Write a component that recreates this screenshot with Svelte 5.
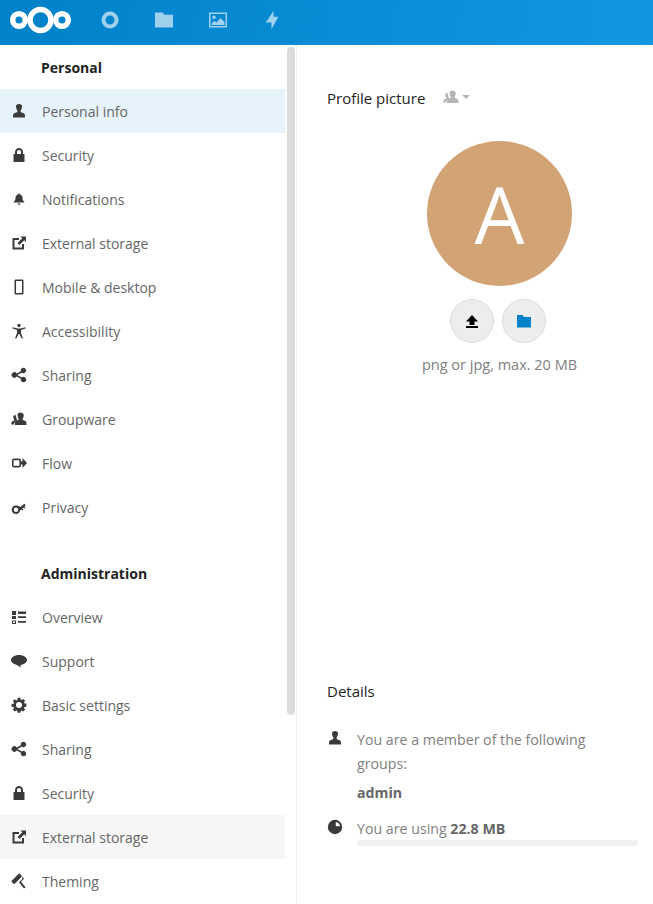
<script>
	const icons = {
		user: 'M8 1C6 1 5 2 5 3.200c0 1.400.5 2.800 1 3.800.3.6.5 1 .5 1.500 0 1-3.500 1.200-4.200 2.700C2 12.200 2 13 2 14.500h12c0-1.500 0-2.300-.3-3.300-.7-1.500-4.200-1.700-4.200-2.700 0-.5.2-.9.5-1.500.5-1 1-2.400 1-3.800C11 2 10 1 8 1z',
		lock: 'M8 1C5.800 1 4 2.800 4 5v2H2.500v8h11V7H12V5c0-2.200-1.800-4-4-4zm0 2c1.100 0 2 .9 2 2v2H6V5c0-1.100.9-2 2-2z',
		bell: 'M8 2.500c-.6 0-1 .4-1 .9C5.400 3.900 4.500 5.200 4.500 7c0 2-.8 3-1.800 3.800V11.500h10.600v-.7C12.300 10 11.500 9 11.500 7c0-1.800-.9-3.100-2.500-3.600 0-.5-.4-.9-1-.9zM6.500 12.500c0 .8.7 1.300 1.500 1.300s1.500-.5 1.500-1.300z',
		external: 'M9.500 1.500l1.800 1.800L6.500 8 8.500 10l4.700-4.700L15 7V1.500zM1.500 3v11.500H13V9h-2v3.500H3.500V5H8V3z',
		mobile: 'M5 .5C4 .5 3.500 1 3.500 2v12c0 1 .5 1.500 1.500 1.500h6c1 0 1.500-.5 1.500-1.500V2c0-1-.5-1.500-1.500-1.500zm0 1.500h6v12H5z',
		access: 'M8 .8a1.700 1.700 0 1 0 0 3.400A1.700 1.700 0 0 0 8 .8zM1.500 4.300v1.200L6 7v3l-2 5.500h1.300L7.700 11h.6l2.400 4.500H12L10 10V7l4.500-1.500V4.300L9 5.500H7z',
		share: 'M12.500 .8a2.700 2.700 0 0 0-2.600 3.400L5.700 6.400a2.800 2.800 0 1 0 0 3.200l4.200 2.200a2.700 2.700 0 1 0 1-1.400L6.700 8.200v-.4l4.200-2.100A2.700 2.700 0 1 0 12.500 .8z',
		group: 'M9 1.500C7.400 1.500 6.500 2.500 6.500 3.900c0 1.200.4 2.400.9 3.300.2.500.4.800.4 1.200 0 .9-3 1-3.500 2.300-.3.900-.3 2.300-.3 3.300H15.500c0-1 0-2.400-.3-3.300-.5-1.300-3.700-1.400-3.700-2.300 0-.4.2-.7.4-1.200.5-.9.9-2.100.9-3.300C12.800 2.500 10.600 1.500 9 1.500zM4.300 4C3.100 4 2.300 4.800 2.300 5.800c0 1 .3 1.800.7 2.500.2.300.3.600.3.900 0 .7-2.300.8-2.700 1.800C.3 11.600.3 12.500.3 13.500h2.900c0-2.300 1-3.300 3.300-4-.7-.9-1.200-2.200-1.300-3.600-.1-.7-.3-1.500-.9-1.900z',
		flow: 'M3 3.500C1.900 3.500 1 4.400 1 5.500v5c0 1.100.9 2 2 2h5c1.100 0 2-.9 2-2v-1h1.500V13l4.500-5-4.500-5v3.500H10v-1c0-1.100-.9-2-2-2zm0 1.700h5c.3 0 .4.1.4.4v4.800c0 .3-.1.4-.4.4H3c-.3 0-.4-.1-.4-.4V5.600c0-.3.1-.4.400-.4z',
		key: 'M5 6.500a4.200 4.200 0 1 0 4 5.300L10.300 10.500l1 1 1.100-1-1-1 .9-.9 1 1 1.100-1-1-1 1.300-1.300-1.200-1.600-4.400 3.200A4.200 4.200 0 0 0 5 6.500zm0 2a2.200 2.200 0 1 1 0 4.400 2.200 2.200 0 0 1 0-4.400z',
		overview: 'M1 2h4v4H1zM7 2.500h8V5H7zM1 7h4v3H1zM7 7.300h8v1.800H7zM1 11.500h4v3.500H1zm1 1v1.500h2v-1.500zM7 12h8v1.800H7z',
		support: 'M8 2C3.600 2 0 4.200 0 7c0 2.300 2.300 4.100 5.300 4.800 1.500.3 2.700 2 4.700 2.700-.5-.8-.7-1.800-.5-2.600C13.200 11.500 16 9.500 16 7 16 4.200 12.400 2 8 2z',
		gear: 'M6.700 1l-.4 2-.9.4-1.700-1.100-1.800 1.800 1.100 1.700-.4.900-2 .4v2.600l2 .4.400.9-1.100 1.700 1.800 1.800 1.700-1.100.9.400.4 2h2.600l.4-2 .9-.4 1.700 1.100 1.800-1.800-1.100-1.700.4-.9 2-.4V6.700l-2-.4-.4-.9 1.100-1.700-1.800-1.800-1.700 1.100-.9-.4-.4-2zM8 5a3 3 0 1 1 0 6 3 3 0 0 1 0-6z',
		theming: 'M7.500 1L1 7.500c-.6.6-.6 1.200 0 1.800l1.200 1.200c.6.6 1.200.6 1.800 0L10.500 4c.5-.5.5-1 0-1.500L9.300 1.200C8.700.5 8.100.4 7.500 1zM11.300 3.500l1.700 2.200-3 3 4.500 5.500-1.500 1.300-5-6.300 3.300-3.300z'
	};

	const personal = [
		['user', 'Personal info'], ['lock', 'Security'], ['bell', 'Notifications'],
		['external', 'External storage'], ['mobile', 'Mobile & desktop'], ['access', 'Accessibility'],
		['share', 'Sharing'], ['group', 'Groupware'], ['flow', 'Flow'], ['key', 'Privacy']
	];
	const admin = [
		['overview', 'Overview'], ['support', 'Support'], ['gear', 'Basic settings'],
		['share', 'Sharing'], ['lock', 'Security'], ['external', 'External storage'], ['theming', 'Theming']
	];
</script>

<div class="page">
	<header>
		<svg class="logo" width="62" height="28" viewBox="0 0 62 28">
			<g fill="none" stroke="#fff">
				<circle cx="9" cy="14" r="6.300" stroke-width="5.500" />
				<circle cx="30.500" cy="14" r="10.500" stroke-width="5.500" />
				<circle cx="52" cy="14" r="6.300" stroke-width="5.500" />
			</g>
		</svg>
		<nav class="apps">
			<span class="app">
				<svg width="18" height="18" viewBox="0 0 18 18"><circle cx="9" cy="9" r="6.500" fill="none" stroke="#fff" stroke-width="4" /></svg>
			</span>
			<span class="app">
				<svg width="18" height="18" viewBox="0 0 18 18"><path fill="#fff" d="M0 1.500h7.500l2 2.200H18V16.500H0z" /></svg>
			</span>
			<span class="app">
				<svg width="18" height="18" viewBox="0 0 18 18"><path fill="#fff" fill-rule="evenodd" d="M0 1.500h18v15H0zM1.500 3v12h15V3zM5 4.500a1.800 1.800 0 1 1 0 3.600 1.800 1.800 0 0 1 0-3.600zM2.500 14v-1.500l3-2.500 2 1.500 4-4.500 4 4V14z" /></svg>
			</span>
			<span class="app">
				<svg width="18" height="18" viewBox="0 0 18 18"><path fill="#fff" d="M10.500 0L2.700 11.500H8.500V18.300L15.300 5.700H10.500z" /></svg>
			</span>
		</nav>
	</header>

	<div class="body">
		<aside>
			<h3>Personal</h3>
			<ul>
				{#each personal as [icon, label], i}
					<li class:active={i === 0}>
						<svg width="16" height="16" viewBox="0 0 16 16"><path fill-rule="evenodd" d={icons[icon]} /></svg>
						{label}
					</li>
				{/each}
			</ul>
			<h3 class="second">Administration</h3>
			<ul>
				{#each admin as [icon, label], i}
					<li class:hover={i === 5}>
						<svg width="16" height="16" viewBox="0 0 16 16"><path fill-rule="evenodd" d={icons[icon]} /></svg>
						{label}
					</li>
				{/each}
			</ul>
			<div class="scrollbar"></div>
		</aside>

		<main>
			<section class="picture">
				<h2>
					Profile picture
					<span class="scope">
						<svg width="16" height="16" viewBox="0 0 16 16"><path fill-rule="evenodd" d={icons.group} /></svg>
						<i class="caret"></i>
					</span>
				</h2>
				<div class="picture-body">
					<div class="avatar">A</div>
					<div class="buttons">
						<button aria-label="Upload">
							<svg width="16" height="16" viewBox="0 0 16 16"><path d="M8 2l-6 6.500h3.500V12h5V8.500H14zM2 13h12v2H2z" /></svg>
						</button>
						<button aria-label="Choose from files">
							<svg width="16" height="16" viewBox="0 0 16 16"><path fill="#0082c9" d="M1 2h5.500L8 4h7v10.500H1z" /></svg>
						</button>
					</div>
					<p class="hint">png or jpg, max. 20 MB</p>
				</div>
			</section>

			<section class="details">
				<h2>Details</h2>
				<div class="row groups">
					<svg width="16" height="16" viewBox="0 0 16 16"><path d={icons.user} /></svg>
					<div>
						<p class="wrap">You are a member of the following groups:</p>
						<p class="admin"><strong>admin</strong></p>
					</div>
				</div>
				<div class="row quota">
					<svg width="16" height="16" viewBox="0 0 16 16"><path fill-rule="evenodd" d="M8 .8a7.200 7.200 0 1 0 0 14.400A7.200 7.200 0 0 0 8 .8zM8.800 3a5 5 0 0 1 4.200 4.200H8.800z" /></svg>
					<div>
						<p>You are using <strong>22.8 MB</strong></p>
						<div class="bar"></div>
					</div>
				</div>
			</section>
		</main>
	</div>
</div>

<style>
	:global(body) {
		margin: 0;
		background: #fff;
	}
	.page {
		width: 653px;
		height: 904px;
		overflow: hidden;
		font-family: "Open Sans", "Liberation Sans", sans-serif;
		font-size: 14px;
		color: #666;
	}
	header {
		height: 45px;
		box-sizing: border-box;
		padding-bottom: 5px;
		display: flex;
		align-items: center;
		background: linear-gradient(100deg, #0082c9, #1196e0);
	}
	.logo {
		margin-left: 9.500px;
		flex: none;
	}
	.apps {
		display: flex;
		margin-left: 11.500px;
	}
	.app {
		width: 54px;
		height: 40px;
		display: flex;
		align-items: center;
		justify-content: center;
	}
	.app svg {
		opacity: 0.62;
	}
	.body {
		display: flex;
		height: 859px;
	}
	aside {
		position: relative;
		flex: none;
		width: 296px;
		border-right: 1px solid #ededed;
		overflow: hidden;
	}
	aside h3 {
		margin: 0;
		height: 44px;
		padding-left: 41px;
		line-height: 46px;
		font-size: 14px;
		font-weight: 700;
		color: #222;
	}
	aside h3.second {
		margin-top: 22px;
	}
	ul {
		list-style: none;
		margin: 0;
		padding: 0;
		width: 285px;
	}
	li {
		height: 44px;
		display: flex;
		align-items: center;
		gap: 15px;
		padding-left: 11px;
		white-space: nowrap;
	}
	li svg {
		flex: none;
		fill: #3a3a3a;
	}
	li.active {
		background: #e6f3fa;
	}
	li.hover {
		background: #f6f6f6;
	}
	.scrollbar {
		position: absolute;
		left: 287px;
		top: 2px;
		width: 8px;
		height: 668px;
		border-radius: 4px;
		background: #dcdcdc;
	}
	main {
		flex: 1;
		min-width: 0;
		padding: 0 15px 0 30px;
		overflow: hidden;
	}
	h2 {
		margin: 0;
		font-size: 15px;
		font-weight: 400;
		color: #222;
	}
	.picture {
		height: 636px;
		padding-top: 44px;
		box-sizing: border-box;
	}
	.picture h2 {
		display: flex;
		align-items: center;
		height: 20px;
		margin-top: -1px;
	}
	.picture-body {
		width: 345px;
		display: flex;
		flex-direction: column;
		align-items: center;
	}
	.scope {
		display: inline-flex;
		align-items: center;
		gap: 3px;
		margin-left: 18px;
		margin-top: -2px;
	}
	.scope svg {
		fill: #b4b4b4;
	}
	.caret {
		width: 0;
		height: 0;
		border: 4px solid transparent;
		border-top-color: #b4b4b4;
		border-bottom: 0;
	}
	.avatar {
		width: 145px;
		height: 145px;
		margin-top: 33px;
		border-radius: 50%;
		background: #d1a375;
		color: #fff;
		font-size: 79px;
		font-weight: 400;
		line-height: 145px;
		text-align: center;
	}
	.buttons {
		display: flex;
		gap: 8px;
		margin-top: 13px;
		padding-right: 3px;
	}
	button {
		width: 44px;
		height: 44px;
		padding: 0;
		border: 1px solid #dbdbdb;
		border-radius: 50%;
		background: #ededed;
		display: flex;
		align-items: center;
		justify-content: center;
	}
	.hint {
		margin: 12px 0 0;
		font-size: 14.500px;
		color: #808080;
	}
	.details h2 {
		margin-bottom: 27px;
	}
	.row {
		display: flex;
		gap: 14px;
	}
	.row svg {
		flex: none;
		fill: #3a3a3a;
		margin-top: 2px;
	}
	.row div {
		flex: 1;
		min-width: 0;
	}
	.row p {
		margin: 0;
		font-size: 14.200px;
		line-height: 24px;
		color: #808080;
	}
	.row p.wrap {
		max-width: 270px;
	}
	.row strong {
		color: #666;
	}
	.row p.admin {
		margin-top: 5px;
	}
	.quota {
		margin-top: 12px;
	}
	.bar {
		height: 6px;
		margin-top: -1px;
		border-radius: 3px;
		background: #f0f0f0;
	}
</style>
